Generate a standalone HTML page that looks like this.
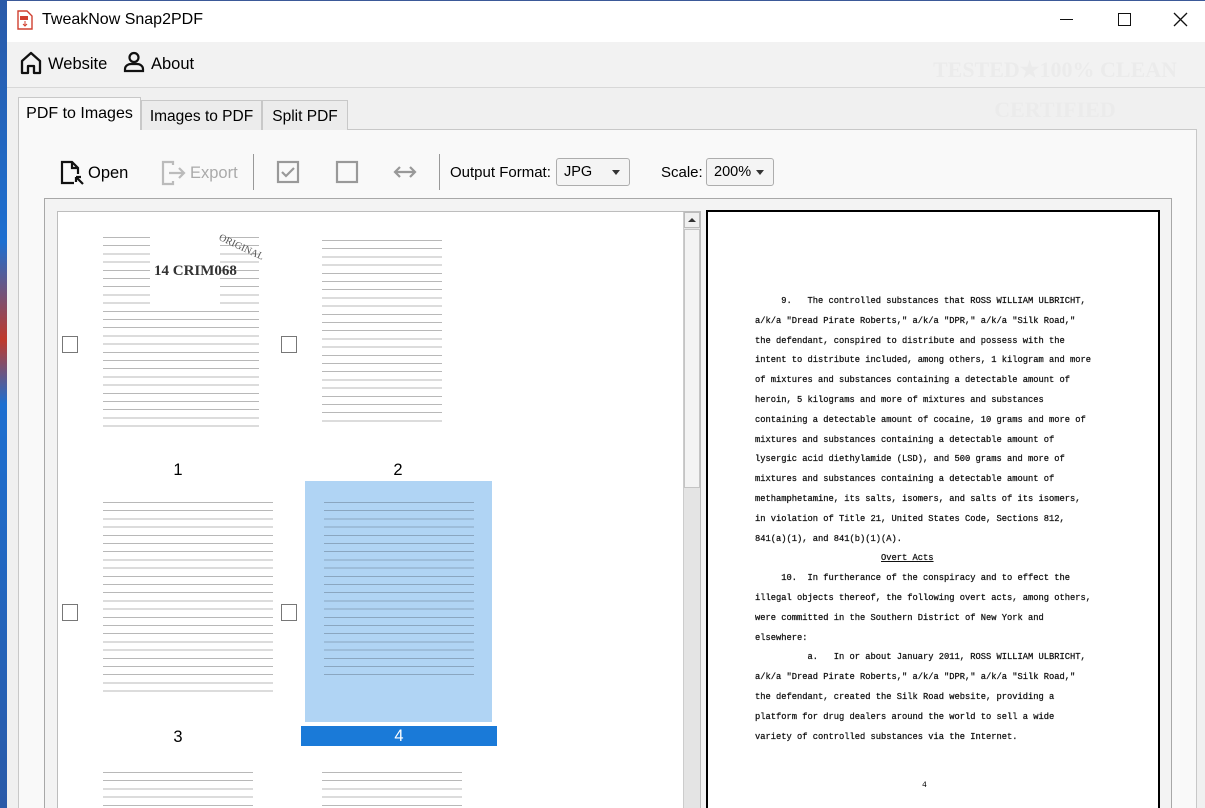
<!DOCTYPE html>
<html style="width:1205px;height:808px;overflow:hidden"><head><meta charset="utf-8">
<style>
*{margin:0;padding:0;box-sizing:border-box}
body{width:1205px;height:808px;overflow:hidden;position:relative;background:#f0f0f0;font-family:"Liberation Sans",sans-serif;color:#000}
.abs{position:absolute}
.strip{left:0;top:0;width:7px;height:808px;background:linear-gradient(#2a5aa8,#1d6fd0 30%,#c0392b 42%,#1d6fd0 50%,#2a5aa8)}
.title{left:7px;top:0;width:1198px;height:42px;background:#fff;border-top:1px solid #3b5998}
.menu{left:7px;top:42px;width:1198px;height:46px;background:#f2f2f2;border-bottom:1px solid #d8d8d8}
.panel{left:18px;top:129px;width:1179px;height:679px;background:#f9f9f9;border:1px solid #c8c8c8;border-bottom:none}
.tab{top:100px;height:30px;background:#ececec;border:1px solid #c8c8c8;border-bottom:none;font-size:15.5px;line-height:32px;text-align:center}
.tab.act{top:97px;height:33px;background:#f9f9f9;z-index:2;font-size:16px}
.tb{font-size:16.5px}
.frame{left:44px;top:198px;width:1128px;height:610px;background:#f3f3f3;border-top:1px solid #a8a8a8;border-left:1px solid #a8a8a8;border-right:1px solid #a8a8a8}
.list{left:57px;top:211px;width:644px;height:597px;background:#fff;border:1px solid #bdbdbd;border-bottom:none}
.cb{width:16px;height:17px;border:1px solid #777;background:#fff}
.thumb{background:repeating-linear-gradient(#fff 0 5px,#b8b8b8 5px 6px,#fff 6px 8.2px)}
.num{font-size:16.5px;width:40px;text-align:center}
.prev{left:706px;top:210px;width:454px;height:598px;background:#fff;border:2px solid #000;border-bottom:none}
pre{font-family:"Liberation Mono",monospace;font-size:8.75px;line-height:19.8px;color:#111;position:absolute;left:755px;top:292px;letter-spacing:0;-webkit-text-stroke:0.25px #111}
.dd{height:28px;background:#f4f4f4;border:1px solid #adadad;border-radius:3px;font-size:14.5px;line-height:27px;padding-left:7px}
.dd:after{content:"";position:absolute;right:9px;top:11px;border-left:4px solid transparent;border-right:4px solid transparent;border-top:5px solid #333}
</style></head><body>
<div class="abs strip"></div>
<div class="abs title"></div>
<svg class="abs" style="left:17px;top:10px" width="16" height="20" viewBox="0 0 16 20"><path d="M1 1h9l5 5v13H1z" fill="#fff" stroke="#d04030" stroke-width="1.4"/><rect x="3" y="6" width="8" height="4" fill="#d04030"/><path d="M8 11v5M6 14l2 2 2-2" stroke="#d04030" fill="none"/></svg>
<div class="abs" style="left:42px;top:11px;font-size:16px">TweakNow Snap2PDF</div>
<div class="abs" style="left:1060px;top:19px;width:13px;height:1.3px;background:#111"></div>
<div class="abs" style="left:1118px;top:13px;width:13px;height:13px;border:1.3px solid #111"></div>
<svg class="abs" style="left:1173px;top:12px" width="15" height="15"><path d="M1 1l13 13M14 1L1 14" stroke="#111" stroke-width="1.3"/></svg>
<div class="abs menu"></div>
<svg class="abs" style="left:20px;top:51px" width="22" height="24" viewBox="0 0 22 24"><path d="M2 10L11 2l9 8v12h-6v-7H8v7H2z" fill="none" stroke="#111" stroke-width="2.3" stroke-linejoin="round"/></svg>
<div class="abs" style="left:48px;top:55px;font-size:16.5px">Website</div>
<svg class="abs" style="left:123px;top:51px" width="22" height="22" viewBox="0 0 22 22"><circle cx="11" cy="6.5" r="4.5" fill="none" stroke="#111" stroke-width="2.2"/><path d="M2 20v-2c0-3 3-5 6-5h6c3 0 6 2 6 5v2z" fill="none" stroke="#111" stroke-width="2.2"/></svg>
<div class="abs" style="left:151px;top:55px;font-size:16.5px">About</div>
<div class="abs" style="left:930px;top:50px;width:250px;height:140px;color:#ebebeb;font:bold 22px 'Liberation Serif',serif;text-align:center;line-height:40px;white-space:nowrap">TESTED★100% CLEAN<br>CERTIFIED<br>MAJORGEEKS</div>
<div class="abs panel"></div>
<div class="abs tab act" style="left:18px;width:123px">PDF to Images</div>
<div class="abs tab" style="left:141px;width:121px">Images to PDF</div>
<div class="abs tab" style="left:262px;width:86px">Split PDF</div>
<svg class="abs" style="left:60px;top:160px" width="26" height="26" viewBox="0 0 26 26"><path d="M14 23H2V2h10l6 6v6M12 2v6h6" fill="none" stroke="#111" stroke-width="2.2"/><path d="M16 17l7 7M16 17v5M16 17h5" stroke="#111" stroke-width="2.2" fill="none"/></svg>
<div class="abs tb" style="left:88px;top:164px">Open</div>
<svg class="abs" style="left:161px;top:160px" width="28" height="26" viewBox="0 0 28 26"><path d="M12 5V2H2v22h10v-3" fill="none" stroke="#bbb" stroke-width="2.2"/><path d="M8 13h15M18 8l5 5-5 5" fill="none" stroke="#bbb" stroke-width="2.2"/></svg>
<div class="abs tb" style="left:190px;top:164px;color:#aaa">Export</div>
<div class="abs" style="left:253px;top:154px;width:1px;height:36px;background:#999"></div>
<svg class="abs" style="left:276px;top:160px" width="24" height="24"><rect x="2" y="2" width="20" height="20" fill="none" stroke="#999" stroke-width="2.2"/><path d="M6 12l4 4 8-8" fill="none" stroke="#999" stroke-width="2.2"/></svg>
<svg class="abs" style="left:335px;top:160px" width="24" height="24"><rect x="2" y="2" width="20" height="20" fill="none" stroke="#999" stroke-width="2.2"/></svg>
<svg class="abs" style="left:392px;top:162px" width="26" height="20"><path d="M3 10h20M8 5l-5 5 5 5M18 5l5 5-5 5" fill="none" stroke="#999" stroke-width="2.2"/></svg>
<div class="abs" style="left:439px;top:154px;width:1px;height:36px;background:#999"></div>
<div class="abs" style="left:450px;top:164px;font-size:15px">Output Format:</div>
<div class="abs dd" style="left:556px;top:158px;width:74px">JPG</div>
<div class="abs" style="left:661px;top:164px;font-size:15px">Scale:</div>
<div class="abs dd" style="left:706px;top:158px;width:68px">200%</div>
<div class="abs frame"></div>
<div class="abs list"></div>
<div class="abs" style="left:683px;top:212px;width:17px;height:596px;background:#e4e4e4;border-left:1px solid #ccc"></div>
<div class="abs" style="left:684px;top:212px;width:16px;height:16px;background:#f0f0f0;border:1px solid #bbb"></div>
<div class="abs" style="left:688px;top:218px;border-left:4px solid transparent;border-right:4px solid transparent;border-bottom:4px solid #333"></div>
<div class="abs" style="left:684px;top:229px;width:16px;height:259px;background:#f3f3f3;border:1px solid #c4c4c4"></div>
<div class="abs thumb" style="left:103px;top:232px;width:156px;height:196px"></div>
<div class="abs" style="left:150px;top:234px;width:70px;height:70px;background:#fff"></div>
<div class="abs" style="left:154px;top:263px;font:bold 15px 'Liberation Serif',serif;color:#333">14 CRIM068</div>
<div class="abs" style="left:217px;top:242px;font:10px 'Liberation Serif',serif;color:#555;transform:rotate(25deg)">ORIGINAL</div>
<div class="abs thumb" style="left:322px;top:235px;width:120px;height:192px"></div>
<div class="abs cb" style="left:62px;top:336px"></div>
<div class="abs cb" style="left:281px;top:336px"></div>
<div class="abs num" style="left:158px;top:461px">1</div>
<div class="abs num" style="left:378px;top:461px">2</div>
<div class="abs thumb" style="left:103px;top:497px;width:170px;height:198px"></div>
<div class="abs" style="left:305px;top:481px;width:187px;height:241px;background:#b0d4f4"></div>
<div class="abs" style="left:324px;top:497px;width:150px;height:185px;background:repeating-linear-gradient(transparent 0 5px,#8aa6c0 5px 6px,transparent 6px 8.2px)"></div>
<div class="abs cb" style="left:62px;top:604px"></div>
<div class="abs cb" style="left:281px;top:604px"></div>
<div class="abs num" style="left:158px;top:728px">3</div>
<div class="abs" style="left:301px;top:726px;width:196px;height:20px;background:#1a7ad8;color:#fff;font-size:16.5px;text-align:center;line-height:20px">4</div>
<div class="abs thumb" style="left:103px;top:767px;width:150px;height:41px"></div>
<div class="abs thumb" style="left:322px;top:767px;width:140px;height:41px"></div>
<div class="abs prev"></div>
<pre>     9.   The controlled substances that ROSS WILLIAM ULBRICHT,
a/k/a "Dread Pirate Roberts," a/k/a "DPR," a/k/a "Silk Road,"
the defendant, conspired to distribute and possess with the
intent to distribute included, among others, 1 kilogram and more
of mixtures and substances containing a detectable amount of
heroin, 5 kilograms and more of mixtures and substances
containing a detectable amount of cocaine, 10 grams and more of
mixtures and substances containing a detectable amount of
lysergic acid diethylamide (LSD), and 500 grams and more of
mixtures and substances containing a detectable amount of
methamphetamine, its salts, isomers, and salts of its isomers,
in violation of Title 21, United States Code, Sections 812,
841(a)(1), and 841(b)(1)(A).
                        <u>Overt Acts</u>
     10.  In furtherance of the conspiracy and to effect the
illegal objects thereof, the following overt acts, among others,
were committed in the Southern District of New York and
elsewhere:
          a.   In or about January 2011, ROSS WILLIAM ULBRICHT,
a/k/a "Dread Pirate Roberts," a/k/a "DPR," a/k/a "Silk Road,"
the defendant, created the Silk Road website, providing a
platform for drug dealers around the world to sell a wide
variety of controlled substances via the Internet.</pre>
<div class="abs" style="left:922px;top:781px;font:8px 'Liberation Mono',monospace">4</div>
</body></html>
